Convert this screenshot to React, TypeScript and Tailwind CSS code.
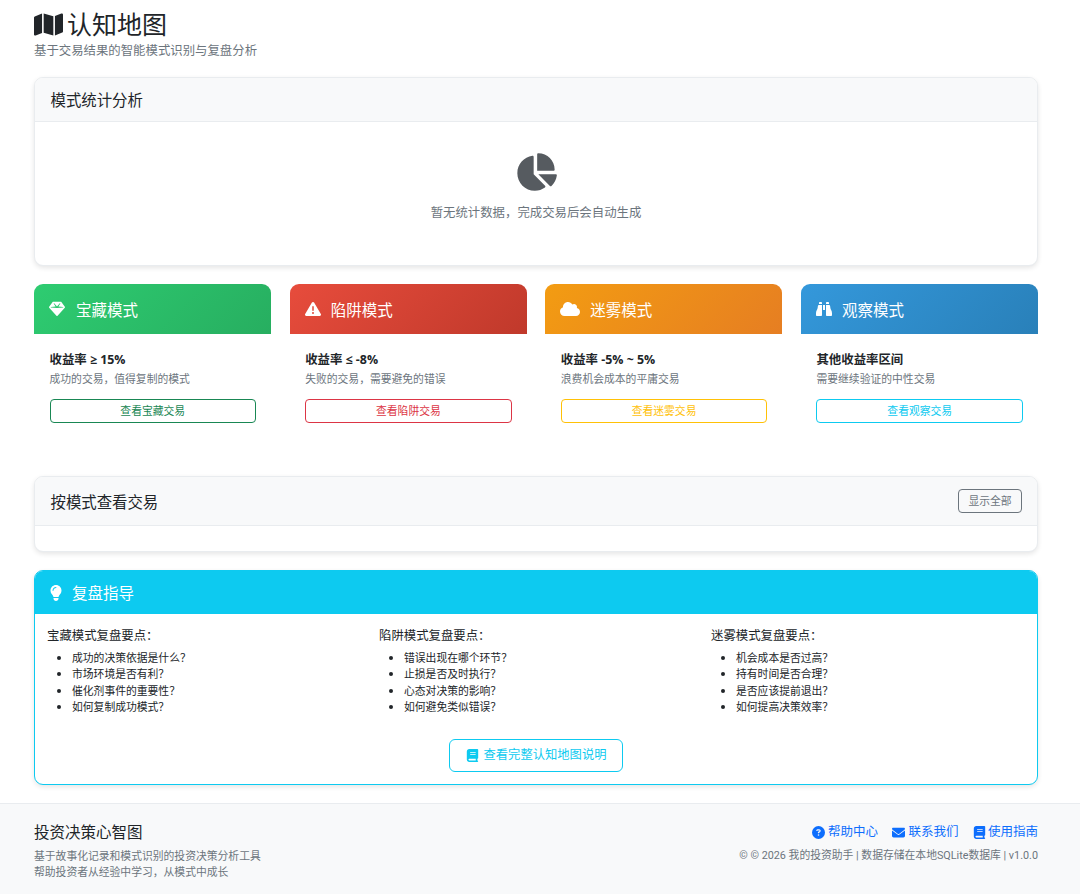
import { FaMap, FaChartPie, FaGem, FaTriangleExclamation, FaCloud, FaBinoculars, FaLightbulb, FaBook, FaCircleQuestion, FaEnvelope } from "react-icons/fa6";
import type { ReactNode } from "react";

const modes = [
  { icon: <FaGem size={16} />, title: "宝藏模式", rule: "收益率 ≥ 15%", desc: "成功的交易，值得复制的模式", btn: "查看宝藏交易", head: "bg-[linear-gradient(135deg,#2ecc71,#27ae60)]", outline: "border-[#198754] text-[#198754]", gap: "gap-[11px]" },
  { icon: <FaTriangleExclamation size={16} />, title: "陷阱模式", rule: "收益率 ≤ -8%", desc: "失败的交易，需要避免的错误", btn: "查看陷阱交易", head: "bg-[linear-gradient(135deg,#e74c3c,#c0392b)]", outline: "border-[#dc3545] text-[#dc3545]", gap: "gap-[10px]" },
  { icon: <FaCloud size={20} />, title: "迷雾模式", rule: "收益率 -5% ~ 5%", desc: "浪费机会成本的平庸交易", btn: "查看迷雾交易", head: "bg-[linear-gradient(135deg,#f39c12,#e67e22)]", outline: "border-[#ffc107] text-[#ffc107]", gap: "gap-[10px]" },
  { icon: <FaBinoculars size={16} />, title: "观察模式", rule: "其他收益率区间", desc: "需要继续验证的中性交易", btn: "查看观察交易", head: "bg-[linear-gradient(135deg,#3498db,#2980b9)]", outline: "border-[#0dcaf0] text-[#0dcaf0]", gap: "gap-[10px]" },
];

const guides = [
  { title: "宝藏模式复盘要点：", items: ["成功的决策依据是什么？", "市场环境是否有利？", "催化剂事件的重要性？", "如何复制成功模式？"] },
  { title: "陷阱模式复盘要点：", items: ["错误出现在哪个环节？", "止损是否及时执行？", "心态对决策的影响？", "如何避免类似错误？"] },
  { title: "迷雾模式复盘要点：", items: ["机会成本是否过高？", "持有时间是否合理？", "是否应该提前退出？", "如何提高决策效率？"] },
];

function Card({ children, className = "" }: { children: ReactNode; className?: string }) {
  return <div className={`rounded-[9px] border border-[#e9ecef] bg-white shadow-[0_2px_5px_rgba(0,0,0,0.1)] ${className}`}>{children}</div>;
}

function FooterLink({ icon, label, gap = "gap-[3px]" }: { icon: ReactNode; label: string; gap?: string }) {
  return (
    <span className={`flex items-center text-[12.5px] leading-[20px] text-[#0d6efd] ${gap}`}>
      {icon}
      {label}
    </span>
  );
}

export default function App() {
  return (
    <div className="min-h-[894px] bg-white font-['Open_Sans','Noto_Sans_CJK_SC',sans-serif] text-[#212529]">
      <main className="pl-[34px] pr-[42px]">
        <div className="pt-[8px]">
          <h1 className="flex h-[33px] items-center gap-[4px] text-[25px] font-normal leading-[33px]">
            <FaMap size={29} />
            认知地图
          </h1>
          <p className="mt-[1px] text-[12.4px] leading-[18px] text-[#6c757d]">基于交易结果的智能模式识别与复盘分析</p>
        </div>

        <Card className="mt-[17px] h-[189px] overflow-hidden">
          <div className="flex h-[44px] items-center border-b border-[#e9ecef] bg-[#f8f9fa] px-[15.5px] pt-[3px] text-[15.4px]">模式统计分析</div>
          <div className="flex flex-col items-center pt-[29px] text-[#6c757d]">
            <FaChartPie size={42} className="text-[#565b60]" />
            <p className="mt-[11px] text-[12.4px] leading-[18px]">暂无统计数据，完成交易后会自动生成</p>
          </div>
        </Card>

        <div className="mt-[18px] grid grid-cols-4 gap-[18.67px]">
          {modes.map((m) => (
            <div key={m.title} className="h-[173px]">
              <div className={`flex h-[50px] items-center rounded-t-[9px] px-[15px] text-[15.5px] text-white ${m.head} ${m.gap}`}>
                {m.icon}
                <span className="pt-[3px]">{m.title}</span>
              </div>
              <div className="pl-[15.5px] pr-[15px] pt-[17px]">
                <div className="text-[12.4px] font-bold leading-[18px]">{m.rule}</div>
                <div className="mt-[1px] text-[10.8px] leading-[18px] text-[#6c757d]">{m.desc}</div>
                <button className={`mt-[11px] h-[24px] w-full rounded-[4px] border bg-white pt-[1px] text-[10.8px] ${m.outline}`}>{m.btn}</button>
              </div>
            </div>
          ))}
        </div>

        <Card className="mt-[19px] h-[76px] overflow-hidden">
          <div className="flex h-[49px] items-center justify-between border-b border-[#e9ecef] bg-[#f8f9fa] pl-[15.5px] pr-[15px] text-[15.4px]">
            <span className="pt-[3px]">按模式查看交易</span>
            <button className="h-[24px] w-[64px] rounded-[4px] border border-[#6c757d] text-[10.8px] text-[#6c757d]">显示全部</button>
          </div>
        </Card>

        <div className="mt-[18px] h-[215px] overflow-hidden rounded-[9px] border border-[#0dcaf0] bg-white shadow-[0_2px_5px_rgba(0,0,0,0.1)]">
          <div className="flex h-[43px] items-center gap-[8px] bg-[#0dcaf0] pl-[13px] text-[15.5px] text-white">
            <FaLightbulb size={16} />
            <span className="pt-[2px]">复盘指导</span>
          </div>
          <div className="grid grid-cols-[332px_332px_1fr] pl-[12px] pt-[13px]">
            {guides.map((g) => (
              <div key={g.title}>
                <div className="text-[12.4px] leading-[18px]">{g.title}</div>
                <ul className="ml-[25px] mt-[5px] list-disc text-[10.8px] leading-[16.3px]">
                  {g.items.map((item) => (
                    <li key={item}>{item}</li>
                  ))}
                </ul>
              </div>
            ))}
          </div>
          <div className="mt-[24px] flex justify-center">
            <button className="flex h-[33px] w-[174px] items-center justify-center gap-[5px] rounded-[6px] border border-[#0dcaf0] text-[12.3px] text-[#0dcaf0]">
              <FaBook size={13} />
              查看完整认知地图说明
            </button>
          </div>
        </div>
      </main>

      <footer className="mt-[18px] flex h-[91px] justify-between border-t border-[#e9ecef] bg-[#f8f9fa] pl-[34px] pr-[42px] pt-[17px]">
        <div>
          <div className="text-[15.5px] leading-[22px]">投资决策心智图</div>
          <div className="mt-[5px] text-[10.8px] leading-[16px] text-[#6c757d]">
            基于故事化记录和模式识别的投资决策分析工具
            <br />
            帮助投资者从经验中学习，从模式中成长
          </div>
        </div>
        <div className="flex flex-col items-end pt-[1px]">
          <div className="flex gap-[14.5px]">
            <FooterLink icon={<FaCircleQuestion size={13} />} label="帮助中心" />
            <FooterLink icon={<FaEnvelope size={13} />} label="联系我们" />
            <FooterLink icon={<FaBook size={13} />} label="使用指南" gap="gap-[2px]" />
          </div>
          <div className="mt-[6px] font-['Roboto','Noto_Sans_CJK_SC',sans-serif] text-[10.8px] leading-[16px] text-[#6c757d]">© © 2026 我的投资助手 | 数据存储在本地SQLite数据库 | v1.0.0</div>
        </div>
      </footer>
    </div>
  );
}
